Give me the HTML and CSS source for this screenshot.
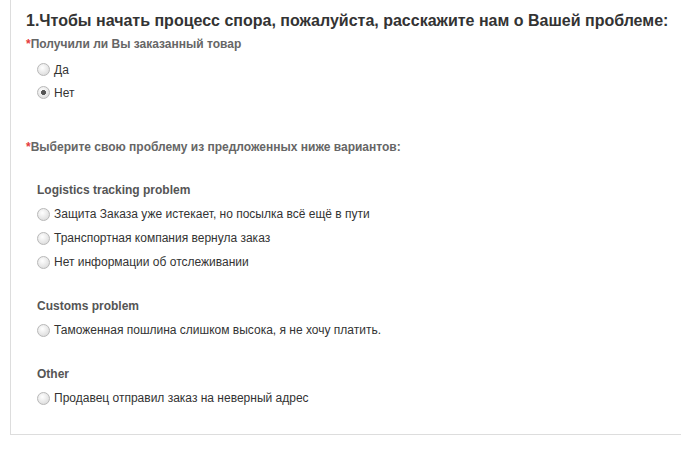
FILE: index.html
```html
<!DOCTYPE html>
<html lang="ru">
<head>
    <meta charset="UTF-8">
    <meta name="viewport" content="width=device-width, initial-scale=1.0">
    <title>Открыть спор</title>
    <link rel="stylesheet" href="styles.css">
</head>
<body>
    <div class="panel">
        <h2 class="title">1.Чтобы начать процесс спора, пожалуйста, расскажите нам о Вашей проблеме:</h2>

        <div class="field">
            <div class="label"><span class="req">*</span>Получили ли Вы заказанный товар</div>
            <div class="options">
                <label class="option"><input type="radio" name="received"> Да</label>
                <label class="option"><input type="radio" name="received" checked> Нет</label>
            </div>
        </div>

        <div class="field field-problem">
            <div class="label"><span class="req">*</span>Выберите свою проблему из предложенных ниже вариантов:</div>

            <div class="group">
                <div class="group-title">Logistics tracking problem</div>
                <label class="option"><input type="radio" name="problem"> Защита Заказа уже истекает, но посылка всё ещё в пути</label>
                <label class="option"><input type="radio" name="problem"> Транспортная компания вернула заказ</label>
                <label class="option"><input type="radio" name="problem"> Нет информации об отслеживании</label>
            </div>

            <div class="group">
                <div class="group-title">Customs problem</div>
                <label class="option"><input type="radio" name="problem"> Таможенная пошлина слишком высока, я не хочу платить.</label>
            </div>

            <div class="group">
                <div class="group-title">Other</div>
                <label class="option"><input type="radio" name="problem"> Продавец отправил заказ на неверный адрес</label>
            </div>
        </div>
    </div>
</body>
</html>
```

FILE: styles.css
```css
body {
    font-family: Arial, "Liberation Sans", sans-serif;
    background-color: #fff;
    color: #333;
    margin: 0;
    padding: 0;
}

.panel {
    margin-left: 10px;
    padding: 11px 0 24px 15px;
    border-left: 1px solid #ddd;
    border-bottom: 1px solid #ddd;
}

.title {
    margin: 0 0 5px;
    font-size: 16px;
    line-height: 20px;
    font-weight: bold;
    color: #333;
    white-space: nowrap;
}

.label {
    font-size: 12px;
    font-weight: bold;
    color: #666;
    line-height: 16px;
}

.req {
    color: #e4393c;
}

.options {
    padding: 6px 0 0 11px;
}

.option {
    display: flex;
    align-items: center;
    height: 23px;
    font-size: 12px;
    color: #333;
}

.option input {
    appearance: none;
    -webkit-appearance: none;
    width: 13px;
    height: 13px;
    margin: 0 4px 0 0;
    border: 1px solid #b8b8b8;
    border-radius: 50%;
    background: radial-gradient(circle at 40% 35%, #fff 0, #f0f0f0 35%, #d4d4d4 100%);
    box-sizing: border-box;
}

.option input:checked {
    background:
        radial-gradient(circle, #555 0, #555 2.2px, transparent 2.8px),
        radial-gradient(circle at 40% 35%, #fff 0, #f0f0f0 35%, #d4d4d4 100%);
}

.field-problem {
    margin-top: 35px;
}

.group {
    padding-left: 11px;
    margin-top: 27px;
}

.group + .group {
    margin-top: 24px;
}

.group-title {
    font-size: 12px;
    font-weight: bold;
    color: #555;
    line-height: 16px;
    margin-bottom: 4px;
}

.group .option {
    height: 24px;
}
```
